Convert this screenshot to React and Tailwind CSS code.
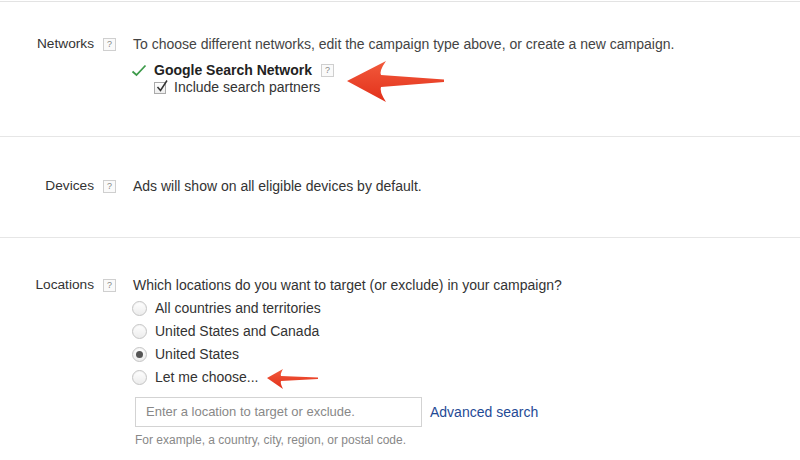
import React from "react";

function Help() {
  return (
    <span className="inline-flex h-[13px] w-[13px] items-center justify-center border border-[#cfcfcf] bg-[#fafafa] text-[9px] leading-none text-[#888]">
      ?
    </span>
  );
}

function Label({ children }) {
  return (
    <div className="flex w-[133px] shrink-0 items-center">
      <div className="w-[94px] text-right text-[13.7px] text-[#333]">{children}</div>
      <div className="ml-[9px] flex items-center">
        <Help />
      </div>
    </div>
  );
}

function Radio({ checked, children }) {
  return (
    <div className="flex h-[23px] items-center">
      <span className="flex h-[15px] w-[15px] items-center justify-center rounded-full border border-[#c4c4c4] bg-gradient-to-b from-white to-[#ececec] shadow-[inset_0_1px_1px_rgba(0,0,0,0.05)]">
        {checked && <span className="h-[7px] w-[7px] rounded-full bg-[#555]" />}
      </span>
      <span className="ml-[8px] text-[#333]">{children}</span>
    </div>
  );
}

function Arrow({ className, d, w, h, id }) {
  return (
    <svg className={className} width={w} height={h} viewBox={`0 0 ${w} ${h}`}>
      <defs>
        <linearGradient id={id} x1="0" y1="0" x2="0" y2="1">
          <stop offset="0" stopColor="#f25a3c" />
          <stop offset="1" stopColor="#e2301a" />
        </linearGradient>
      </defs>
      <path d={d} fill={`url(#${id})`} />
    </svg>
  );
}

export default function App() {
  return (
    <div
      className="relative h-[460px] w-[800px] overflow-hidden bg-white text-[14px] text-[#333]"
      style={{ fontFamily: '"Liberation Sans", Arial, sans-serif' }}
    >
      <div className="mt-px h-[1px] bg-[#e3e3e3]" />

      {/* Networks */}
      <section className="h-[135px] border-b border-[#e6e6e6] pt-[33px]">
        <div className="flex h-[18px] items-center">
          <Label>Networks</Label>
          <div className="text-[#444]">
            To choose different networks, edit the campaign type above, or create a new campaign.
          </div>
        </div>
        <div className="ml-[131px] mt-[9px] flex h-[17px] items-center">
          <svg width="16" height="13" viewBox="0 0 16 13" className="mr-[7px]">
            <path d="M1.5 7.5 L5.5 11 L14.5 1.5" fill="none" stroke="#3d9a4a" strokeWidth="1.8" />
          </svg>
          <span className="font-bold text-[#222]">Google Search Network</span>
          <span className="ml-[9px] flex items-center">
            <Help />
          </span>
        </div>
        <div className="ml-[154px] flex h-[17px] items-center">
          <span className="relative h-[12px] w-[12px] border border-[#aaa] bg-gradient-to-b from-white to-[#eee]">
            <svg width="14" height="14" viewBox="0 0 14 14" className="absolute -top-[4px] left-0">
              <path d="M2.5 8 L5.5 11.5 L12 1.5" fill="none" stroke="#333" strokeWidth="1.5" />
            </svg>
          </span>
          <span className="ml-[8px] text-[#333]">Include search partners</span>
        </div>
      </section>

      {/* Devices */}
      <section className="h-[101px] border-b border-[#e6e6e6] pt-[40px]">
        <div className="flex h-[18px] items-center">
          <Label>Devices</Label>
          <div className="text-[#333]">Ads will show on all eligible devices by default.</div>
        </div>
      </section>

      {/* Locations */}
      <section className="pt-[38px]">
        <div className="flex h-[18px] items-center">
          <Label>Locations</Label>
          <div className="text-[#333]">Which locations do you want to target (or exclude) in your campaign?</div>
        </div>
        <div className="ml-[132px] mt-[3px]">
          <Radio>All countries and territories</Radio>
          <Radio>United States and Canada</Radio>
          <Radio checked>United States</Radio>
          <Radio>Let me choose...</Radio>
        </div>
        <div className="ml-[135px] mt-[8px] flex items-center">
          <div className="flex h-[30px] w-[287px] items-center border border-[#d3d3d3] px-[10px] text-[13px] text-[#888]">
            Enter a location to target or exclude.
          </div>
          <a className="ml-[8px] text-[#1f4a95]">Advanced search</a>
        </div>
        <div className="ml-[135px] mt-[4px] text-[12px] text-[#888]">
          For example, a country, city, region, or postal code.
        </div>
      </section>

      <Arrow
        id="a1"
        className="absolute left-[345px] top-[58px]"
        w={102}
        h={46}
        d="M2 23 L41 3 Q34 13 36 17 L99 21.5 L99 24 L36 29 Q34 33 41 44 Z"
      />
      <Arrow
        id="a2"
        className="absolute left-[266px] top-[368px]"
        w={54}
        h={22}
        d="M1 10 L17 1 Q14 6 15 8 L52 9.5 L52 11 L15 13 Q14 15 17 21 Z"
      />
    </div>
  );
}
